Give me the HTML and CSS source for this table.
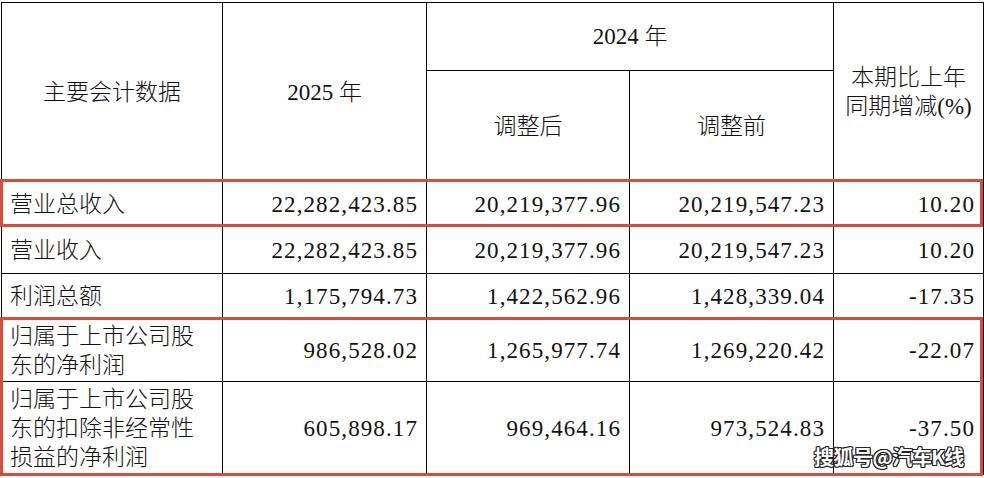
FILE: index.html
```html
<!DOCTYPE html>
<html lang="zh-CN">
<head>
<meta charset="utf-8">
<title>主要会计数据</title>
<link rel="stylesheet" href="styles.css">
</head>
<body>
<div class="page">
  <table class="data">
    <colgroup>
      <col class="c1"><col class="c2"><col class="c3"><col class="c4"><col class="c5">
    </colgroup>
    <thead>
      <tr class="h1">
        <th rowspan="2" class="head">主要会计数据</th>
        <th rowspan="2" class="head">2025 年</th>
        <th colspan="2" class="head y2024">2024 年</th>
        <th rowspan="2" class="head chg">本期比上年<br>同期增减(%)</th>
      </tr>
      <tr class="h2">
        <th class="head sub">调整后</th>
        <th class="head sub">调整前</th>
      </tr>
    </thead>
    <tbody>
      <tr class="r1">
        <td class="name">营业总收入</td>
        <td class="num">22,282,423.85</td>
        <td class="num">20,219,377.96</td>
        <td class="num">20,219,547.23</td>
        <td class="num">10.20</td>
      </tr>
      <tr class="r2">
        <td class="name">营业收入</td>
        <td class="num">22,282,423.85</td>
        <td class="num">20,219,377.96</td>
        <td class="num">20,219,547.23</td>
        <td class="num">10.20</td>
      </tr>
      <tr class="r3">
        <td class="name">利润总额</td>
        <td class="num">1,175,794.73</td>
        <td class="num">1,422,562.96</td>
        <td class="num">1,428,339.04</td>
        <td class="num">-17.35</td>
      </tr>
      <tr class="r4">
        <td class="name">归属于上市公司股东的净利润</td>
        <td class="num">986,528.02</td>
        <td class="num">1,265,977.74</td>
        <td class="num">1,269,220.42</td>
        <td class="num">-22.07</td>
      </tr>
      <tr class="r5">
        <td class="name">归属于上市公司股东的扣除非经常性损益的净利润</td>
        <td class="num">605,898.17</td>
        <td class="num">969,464.16</td>
        <td class="num">973,524.83</td>
        <td class="num">-37.50</td>
      </tr>
    </tbody>
  </table>
  <div class="mark mark-a"></div>
  <div class="mark mark-b"></div>
  <div class="watermark">搜狐号@汽车K线</div>
</div>
</body>
</html>
```

FILE: styles.css
```css
html, body {
  margin: 0;
  padding: 0;
  background: #ffffff;
}

body {
  width: 984px;
  height: 478px;
  overflow: hidden;
}

.page {
  position: relative;
  padding: 2px 0 0 1px;
}

.data {
  border-collapse: collapse;
  table-layout: fixed;
  width: 982px;
  font-family: "Liberation Serif", "Noto Sans CJK SC", serif;
  font-size: 23px;
  font-weight: 300;
  color: #111;
}

.c1 { width: 221px; }
.c2 { width: 204px; }
.c3 { width: 203px; }
.c4 { width: 204px; }
.c5 { width: 150px; }

.data th,
.data td {
  border: 1px solid #000;
  padding: 0 8px 0 8px;
  line-height: 29px;
}

.head {
  font-weight: 300;
  text-align: center;
  vertical-align: middle;
}

.y2024 {
  padding-top: 6px;
}

.sub {
  padding-top: 28px;
}

.chg {
  padding: 0 4px;
}

.h1 { height: 68px; }
.h2 { height: 111px; }
.r1 { height: 45px; }
.r2 { height: 47px; }
.r3 { height: 46px; }
.r4 { height: 62px; }
.r5 { height: 93px; }

.name {
  text-align: left;
  vertical-align: middle;
}

.num {
  text-align: right;
  vertical-align: middle;
  letter-spacing: 1.1px;
  padding-right: 7px;
}

.mark {
  position: absolute;
  border: 3px solid #d74d3b;
  box-sizing: border-box;
  pointer-events: none;
}

.mark-a {
  left: 0;
  top: 179px;
  width: 983px;
  height: 48px;
}

.mark-b {
  left: 0;
  top: 317px;
  width: 983px;
  height: 159px;
}

.watermark {
  position: absolute;
  left: 814px;
  top: 442px;
  font-family: "Noto Sans CJK SC", sans-serif;
  font-size: 20px;
  font-weight: 700;
  color: #ffffff;
  letter-spacing: -0.5px;
  text-shadow:
    1px 0 0 #222, -1px 0 0 #222, 0 1px 0 #222, 0 -1px 0 #222,
    1px 1px 0 #222, -1px -1px 0 #222, 1px -1px 0 #222, -1px 1px 0 #222;
}
```
